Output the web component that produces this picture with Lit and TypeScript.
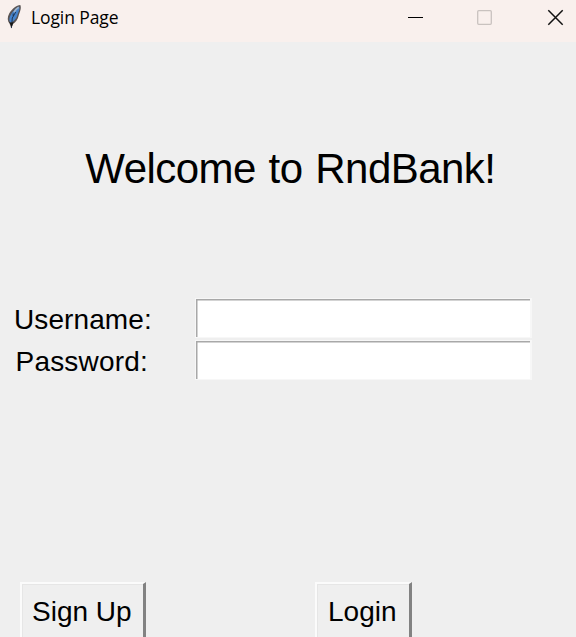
import { LitElement, html, css } from "lit";
import { customElement } from "lit/decorators.js";

@customElement("app-root")
export class AppRoot extends LitElement {
  static styles = css`
    :host {
      display: flex;
      flex-direction: column;
      width: 576px;
      height: 637px;
      overflow: hidden;
      background: #efefef;
      color: #000;
      font-family: "Liberation Sans", Arial, sans-serif;
      font-size: 28px;
      white-space: nowrap;
    }
    * { box-sizing: border-box; }
    .bar {
      flex: none;
      height: 42px;
      background: #f9f0ed;
      display: flex;
      align-items: flex-start;
    }
    svg { display: block; flex: none; }
    .feather { margin: 4px 0 0 6px; }
    .title {
      flex: 1;
      padding: 5px 0 0 8px;
      font: 17.5px/24px "Open Sans", "Noto Sans", sans-serif;
      letter-spacing: -0.1px;
    }
    .controls { margin-top: 9px; }
    .heading {
      flex: none;
      margin: 104px 0 0 85.3px;
      font-weight: 400;
      font-size: 42px;
      line-height: 46px;
      letter-spacing: -0.55px;
      word-spacing: 1.7px;
    }
    .form {
      flex: none;
      margin: 106px 0 0;
      display: grid;
      grid-template-columns: 195px 337px;
      grid-auto-rows: 40px;
      row-gap: 2px;
    }
    .label { line-height: 32px; padding: 6px 0 0 14px; letter-spacing: 0.1px; }
    .label.second { padding-left: 15.5px; letter-spacing: 0.2px; }
    .entry {
      border: 0 solid #f7f7f7;
      border-width: 1px 2px 1px 1px;
      background: #fff;
      box-shadow: inset 2px 2px 0 -0.5px #a8a8a8;
      outline: none;
      width: 337px;
      height: 40px;
      padding: 0 4px;
      font: inherit;
    }
    .actions {
      flex: none;
      margin: 202px 0 0 20px;
      display: flex;
      gap: 169px;
    }
    .btn {
      height: 60px;
      width: 126px;
      padding: 12px 0 11px 10px;
      border: solid;
      border-width: 2px 3px 3px 2px;
      border-color: #fbfbfb #828282 #828282 #fbfbfb;
      background: #efefef;
      box-shadow: inset 1px 1px 0 #e6e6e6;
      font: inherit;
      line-height: 32px;
      text-align: left;
      color: inherit;
    }
    .btn.login { width: 97px; padding-left: 11px; }
  `;

  render() {
    return html`
      <header class="bar">
        <svg class="feather" width="17" height="25" viewBox="0 0 17 25">
          <path d="M14.3 0.9C10.5 1.2 6 4.4 3.2 9.5C1.2 13.2 1.2 17 3.6 19.8L5.4 24.4L6.7 20.2C10 18 11.8 15.5 12.7 11.5C13.6 8 15.8 4.5 14.3 0.9Z" fill="#5a5454"/>
          <path d="M13.2 2.4C9.8 3.8 5.9 8 4 12.5C3 15 3.3 17.2 4.6 18.8C8.6 16.8 10.4 14.5 11.4 11C12.1 8 14.2 5.3 13.2 2.4Z" fill="#4583cc"/>
          <path d="M12.7 3.3C10.8 4.5 9 6 8 8.3" fill="none" stroke="#9eb2c9" stroke-width="1.6"/>
          <path d="M9.7 8L6.3 14L5.4 24M7.2 9.5V12" fill="none" stroke="#172c47" stroke-width="0.9"/>
          <path d="M3.2 17.8Q5.5 19.5 7.7 17.8L5.7 23Z" fill="#171717"/>
        </svg>
        <span class="title">Login Page</span>
        <svg class="controls" width="168" height="18" viewBox="0 0 168 18">
          <path d="M0 8.5H15" stroke="#000" fill="none"/>
          <rect x="69.7" y="1.7" width="13.6" height="13.6" rx="1" fill="none" stroke="#c9c2bf" stroke-width="1.3"/>
          <path d="M140.3 1.3L154.7 15.7M154.7 1.3L140.3 15.7" stroke="#111" stroke-width="1.5" fill="none"/>
        </svg>
      </header>
      <h1 class="heading">Welcome to RndBank!</h1>
      <div class="form">
        <label class="label" for="user">Username:</label>
        <input class="entry" id="user" type="text" />
        <label class="label second" for="pass">Password:</label>
        <input class="entry" id="pass" type="password" />
      </div>
      <div class="actions">
        <button class="btn">Sign Up</button>
        <button class="btn login">Login</button>
      </div>
    `;
  }
}
